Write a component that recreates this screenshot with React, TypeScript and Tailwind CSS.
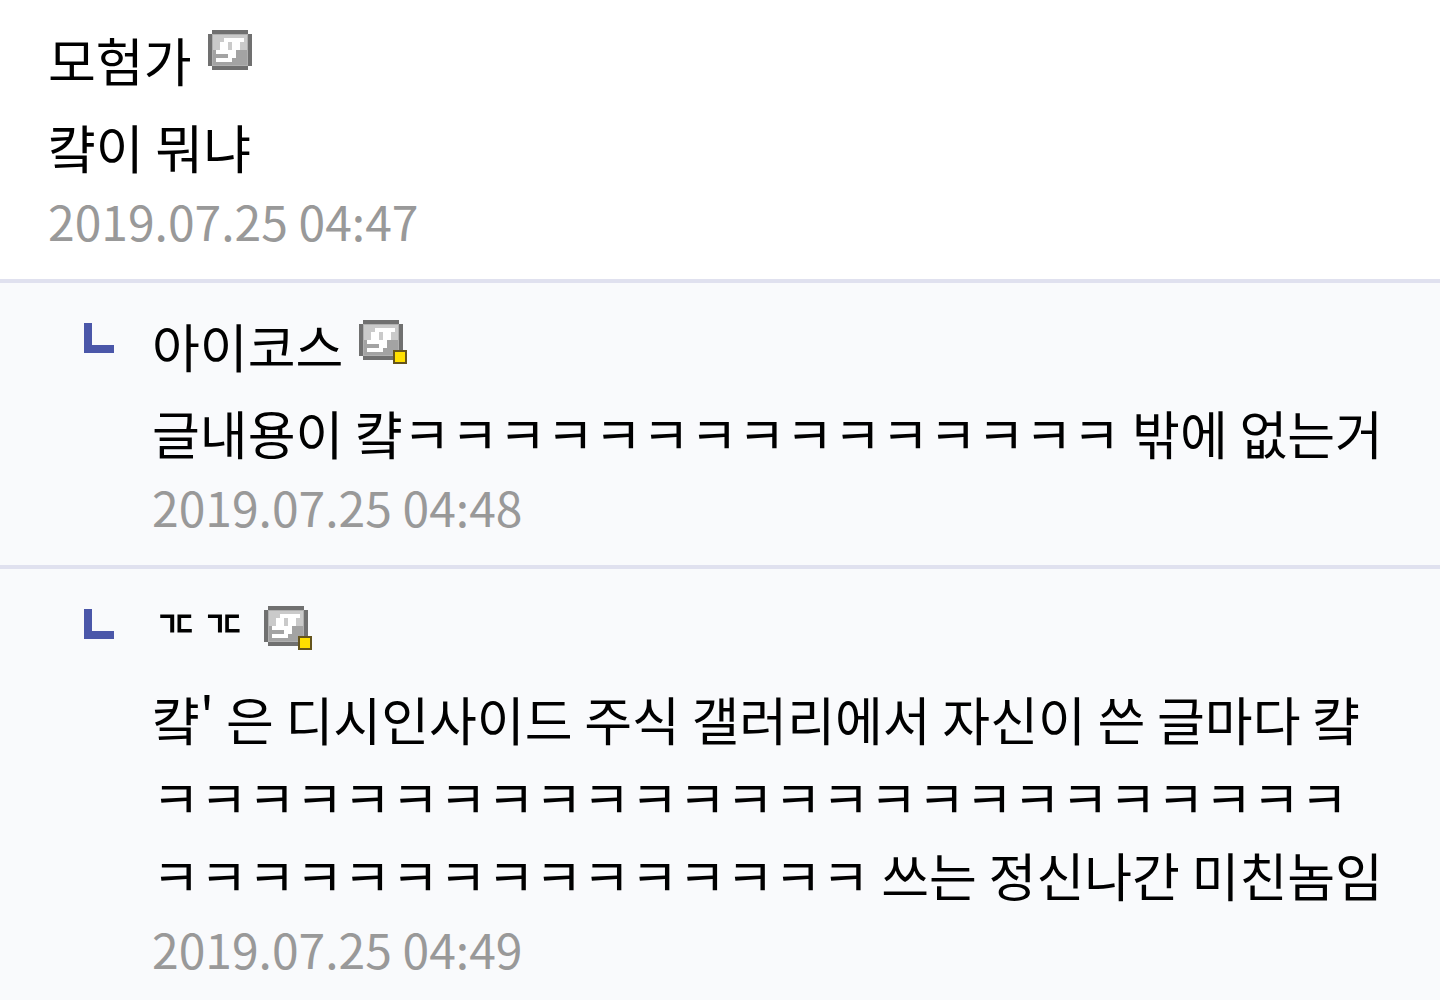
type MemberType = 'basic' | 'manager';

interface Comment {
  id: number;
  nickname: string;
  member: MemberType;
  text: string;
  date: string;
  isReply: boolean;
}

const COMMENTS: Comment[] = [
  {
    id: 1,
    nickname: '모험가',
    member: 'basic',
    text: '컄이 뭐냐',
    date: '2019.07.25 04:47',
    isReply: false,
  },
  {
    id: 2,
    nickname: '아이코스',
    member: 'manager',
    text: `글내용이 컄${'ㅋ'.repeat(15)} 밖에 없는거`,
    date: '2019.07.25 04:48',
    isReply: true,
  },
  {
    id: 3,
    nickname: '\u115A\u115A',
    member: 'manager',
    text: `컄' 은 디시인사이드 주식 갤러리에서 자신이 쓴 글마다 컄${'ㅋ'.repeat(40)} 쓰는 정신나간 미친놈임`,
    date: '2019.07.25 04:49',
    isReply: true,
  },
];

// Pixel-art badge shown next to the nickname, one cell = 4px
function MemberBadge({ member }: { member: MemberType }) {
  return (
    <svg
      role="img"
      aria-label={member === 'manager' ? '고정닉 매니저' : '고정닉'}
      viewBox="0 0 48 44"
      className={`h-11 w-12 shrink-0 ${member === 'manager' ? 'mt-[13px]' : 'mt-[9px]'}`}
    >
      <path d="M4 0h36v4h4v32h-4v4H4v-4H0V4h4z" fill="#707070" />
      <path d="M4 4h36v32H4z" fill="#b0b0b0" />
      <path d="M5 5h34v15H5z" fill="#cacaca" />
      <path d="M5 20h34v15H5z" fill="#a3a3a3" />
      <path
        d="M16 8h20v4h-4v8h-4v8h-4v4H8v-4h12v-4H8v-4h4v-8h4zM20 12v8h4v-8z"
        fill="#fff"
        fillRule="evenodd"
      />
      {member === 'manager' && (
        <>
          <path d="M34 30h14v14H34z" fill="#65541c" />
          <path d="M36 32h10v10H36z" fill="#ffdf00" />
        </>
      )}
    </svg>
  );
}

function ReplyArrow() {
  return (
    <svg aria-hidden="true" viewBox="0 0 30 30" className="mt-4 h-[30px] w-[30px] shrink-0">
      <path d="M0 0h8v22h22v8H0z" fill="#4b57a9" />
    </svg>
  );
}

function CommentItem({ comment }: { comment: Comment }) {
  return (
    <li
      className={`flex border-b-4 border-[#e0e1ef] pr-12 pb-[25px] ${
        comment.isReply ? 'gap-[38px] bg-[#f9fafc] pt-6 pl-[84px]' : 'bg-white pt-[21px] pl-12'
      }`}
    >
      {comment.isReply && <ReplyArrow />}
      <div className="min-w-0 flex-1">
        <div className="flex items-start gap-4">
          <strong className="text-[52px] leading-[78px] font-normal">{comment.nickname}</strong>
          <MemberBadge member={comment.member} />
        </div>
        <p className="mt-[9px] text-[52px] leading-[78px]">{comment.text}</p>
        <time className="block text-[48px] leading-[68px] text-[#999]">{comment.date}</time>
      </div>
    </li>
  );
}

export default function App() {
  return (
    <main className="min-h-screen bg-[#f9fafc] font-['Noto_Sans_CJK_KR',sans-serif] text-black" lang="ja">
      <ul>
        {COMMENTS.map((comment) => (
          <CommentItem key={comment.id} comment={comment} />
        ))}
      </ul>
    </main>
  );
}
